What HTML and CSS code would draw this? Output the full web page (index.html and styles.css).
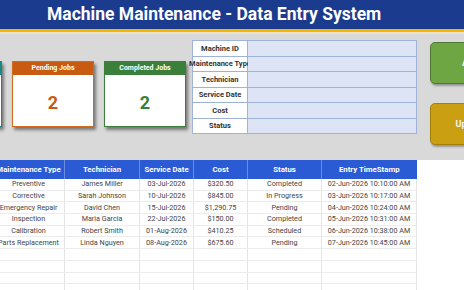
FILE: index.html
```html
<!DOCTYPE html>
<html lang="en">
  <head>
    <meta charset="utf-8" />
    <meta name="viewport" content="width=device-width, initial-scale=1" />
    <title>Machine Maintenance - Data Entry System</title>
    <link rel="stylesheet" href="styles.css">
  </head>
  <body>
    <header class="title-bar">
      <h1>Machine Maintenance - Data Entry System</h1>
    </header>

    <section class="panel">
      <div class="cards">
        <div class="card card-total">
          <div class="card-head">Total Jobs</div>
          <div class="card-value">6</div>
        </div>
        <div class="card card-pending">
          <div class="card-head">Pending Jobs</div>
          <div class="card-value">2</div>
        </div>
        <div class="card card-done">
          <div class="card-head">Completed Jobs</div>
          <div class="card-value">2</div>
        </div>
      </div>

      <div class="entry-form">
        <label>Machine ID</label><input autocomplete=off />
        <label>Maintenance Type</label><input autocomplete=off />
        <label>Technician</label><input autocomplete=off />
        <label>Service Date</label><input autocomplete=off />
        <label>Cost</label><input autocomplete=off />
        <label>Status</label><input autocomplete=off />
      </div>

      <div class="actions">
        <button class="btn btn-add">Add</button>
        <button class="btn btn-update">Update</button>
      </div>
    </section>

    <table class="records">
      <colgroup>
        <col class="c-type"><col class="c-tech"><col class="c-date"><col class="c-cost"><col class="c-status"><col class="c-stamp">
      </colgroup>
      <thead>
        <tr>
          <th>Maintenance Type</th><th>Technician</th><th>Service Date</th><th>Cost</th><th>Status</th><th>Entry TimeStamp</th>
        </tr>
      </thead>
      <tbody>
        <tr><td>Preventive</td><td>James Miller</td><td>03-Jul-2026</td><td>$320.50</td><td>Completed</td><td>02-Jun-2026 10:10:00 AM</td></tr>
        <tr><td>Corrective</td><td>Sarah Johnson</td><td>10-Jul-2026</td><td>$845.00</td><td>In Progress</td><td>03-Jun-2026 10:17:00 AM</td></tr>
        <tr><td>Emergency Repair</td><td>David Chen</td><td>15-Jul-2026</td><td>$1,290.75</td><td>Pending</td><td>04-Jun-2026 10:24:00 AM</td></tr>
        <tr><td>Inspection</td><td>Maria Garcia</td><td>22-Jul-2026</td><td>$150.00</td><td>Completed</td><td>05-Jun-2026 10:31:00 AM</td></tr>
        <tr><td>Calibration</td><td>Robert Smith</td><td>01-Aug-2026</td><td>$410.25</td><td>Scheduled</td><td>06-Jun-2026 10:38:00 AM</td></tr>
        <tr><td>Parts Replacement</td><td>Linda Nguyen</td><td>08-Aug-2026</td><td>$675.60</td><td>Pending</td><td>07-Jun-2026 10:45:00 AM</td></tr>
        <tr><td></td><td></td><td></td><td></td><td></td><td></td></tr>
        <tr><td></td><td></td><td></td><td></td><td></td><td></td></tr>
        <tr><td></td><td></td><td></td><td></td><td></td><td></td></tr>
        <tr><td></td><td></td><td></td><td></td><td></td><td></td></tr>
      </tbody>
    </table>
    <div class="sheet-edge"></div>
  </body>
</html>
```

FILE: styles.css
```css
body {
    margin: 0;
    width: 464px;
    height: 290px;
    overflow: hidden;
    background: #fff;
    font-family: Roboto, "Liberation Sans", sans-serif;
}

/* title band */
.title-bar {
    height: 29px;
    background: #1b3b8f;
    border-bottom: 3px solid #f2b705;
    box-shadow: 0 2px 0 #ece3c6;
}
.title-bar h1 {
    margin: 0;
    padding-left: 47px;
    line-height: 29px;
    font-size: 17.5px;
    font-weight: 700;
    color: #fff;
    white-space: nowrap;
}

/* grey input panel */
.panel {
    display: flex;
    align-items: flex-start;
    height: 126px;
    margin-top: 2px;
    background: #d9d9d9;
    overflow: hidden;
}

.cards {
    display: flex;
    gap: 10px;
    margin-left: -80px;
    margin-top: 27px;
}
.card {
    width: 80px;
    height: 64px;
    background: #fff;
    border: 1px solid;
    box-shadow: 2px 3px 3px rgba(0, 0, 0, .45);
}
.card-head {
    height: 13px;
    line-height: 13px;
    text-align: center;
    font-size: 7px;
    font-weight: 700;
    color: #fff;
}
.card-value {
    padding-top: 17px;
    text-align: center;
    font-size: 18px;
    font-weight: 700;
}
.card-total { border-color: #178a80; }
.card-total .card-head { background: #178a80; }
.card-total .card-value { color: #178a80; }
.card-pending { border-color: #d26a1e; }
.card-pending .card-head { background: #c85a12; }
.card-pending .card-value { color: #c85a12; }
.card-done { border-color: #3b7f3c; }
.card-done .card-head { background: #3a803b; }
.card-done .card-value { color: #3a803b; }

.entry-form {
    display: grid;
    grid-template-columns: 55px 169px;
    grid-auto-rows: 15.5px;
    margin-top: 6px;
    margin-left: 6px;
    border-top: 1px solid #9fb3d9;
    border-left: 1px solid #9fb3d9;
}
.entry-form label,
.entry-form input {
    box-sizing: border-box;
    margin: 0;
    border: 0;
    border-right: 1px solid #9fb3d9;
    border-bottom: 1px solid #9fb3d9;
}
.entry-form label {
    display: flex;
    align-items: center;
    justify-content: center;
    background: #fff;
    font-size: 7.5px;
    font-weight: 700;
    color: #333;
    white-space: nowrap;
}
.entry-form input {
    height: 15.5px;
    padding: 0;
    background: #dde4f6;
    outline: none;
}

.actions {
    display: flex;
    flex-direction: column;
    gap: 19px;
    margin-top: 8px;
    margin-left: 13px;
}
.btn {
    width: 80px;
    height: 42px;
    border-radius: 5px;
    border: 1px solid;
    font-family: Roboto, "Liberation Sans", sans-serif;
    font-size: 9px;
    font-weight: 700;
    color: #f4f4e8;
    box-shadow: 1px 2px 2px rgba(0, 0, 0, .3);
}
.btn-add {
    background: #6ea644;
    border-color: #4d7a30;
}
.btn-update {
    background: #caa012;
    border-color: #a37f08;
}

/* records sheet */
.records {
    table-layout: fixed;
    border-collapse: collapse;
    width: 424px;
    margin-left: -8px;
    font-size: 7.2px;
    color: #444;
}
.c-type { width: 72px; }
.c-tech { width: 75px; }
.c-date { width: 54px; }
.c-cost { width: 54px; }
.c-status { width: 74px; }
.c-stamp { width: 95px; }

.records th {
    height: 19px;
    padding: 0;
    background: #2b5bd4;
    color: #fff;
    font-size: 7.8px;
    font-weight: 700;
    border-left: 1px solid #6b8ee2;
}
.records td {
    height: 10.7px;
    padding: 0;
    line-height: 10px;
    text-align: center;
    white-space: nowrap;
    border-left: 1px solid #e4e4e4;
    border-right: 1px solid #e4e4e4;
    border-bottom: 1px solid #ececec;
}

.sheet-edge {
    height: 2px;
    background: #c4c4c4;
}
```
